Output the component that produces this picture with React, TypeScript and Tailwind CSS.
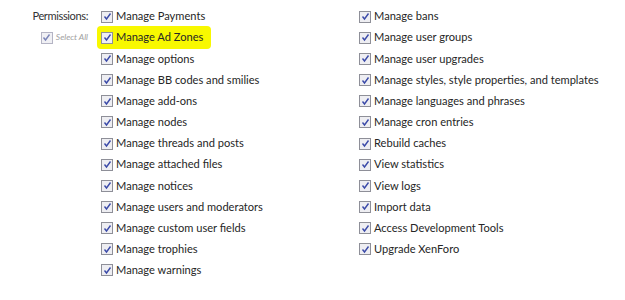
import React from "react";

const left = [
  "Manage Payments",
  "Manage Ad Zones",
  "Manage options",
  "Manage BB codes and smilies",
  "Manage add-ons",
  "Manage nodes",
  "Manage threads and posts",
  "Manage attached files",
  "Manage notices",
  "Manage users and moderators",
  "Manage custom user fields",
  "Manage trophies",
  "Manage warnings",
];
const right = [
  "Manage bans",
  "Manage user groups",
  "Manage user upgrades",
  "Manage styles, style properties, and templates",
  "Manage languages and phrases",
  "Manage cron entries",
  "Rebuild caches",
  "View statistics",
  "View logs",
  "Import data",
  "Access Development Tools",
  "Upgrade XenForo",
];

function Box({ faded = false }: { faded?: boolean }) {
  return (
    <span
      className={`inline-flex h-[12px] w-[12px] shrink-0 items-center justify-center border ${
        faded ? "border-[#b4b4c4] bg-[#f0f0f4]" : "border-[#8e8f98] bg-[#eeeef2]"
      }`}
    >
      <svg width="9" height="9" viewBox="0 0 9 9">
        <path
          d="M1.5 4.5 L3.5 7 L7.5 1.5"
          fill="none"
          stroke={faded ? "#7a84b8" : "#3b4aa8"}
          strokeWidth="1.4"
        />
      </svg>
    </span>
  );
}

function Item({ label, hl = false }: { label: string; hl?: boolean }) {
  return (
    <div className="flex h-[21.17px] items-center">
      <div
        className={`flex items-center gap-[3px] ${
          hl ? "-ml-[4px] rounded-[4px] bg-[#f8f800] py-[3px] pl-[4px] pr-[8px]" : ""
        }`}
      >
        <Box />
        <span className="whitespace-nowrap text-[11.1px] text-[#262626]">{label}</span>
      </div>
    </div>
  );
}

export default function App() {
  return (
    <div
      className="h-[300px] w-[625px] bg-white pt-[6px]"
      style={{ fontFamily: "Lato, 'Liberation Sans', sans-serif" }}
    >
      <div className="flex">
        <div className="w-[101px] shrink-0 pr-[13px]">
          <div className="flex h-[21.17px] items-center justify-end">
            <span className="text-[11.1px] tracking-[-0.4px] text-[#333]">Permissions:</span>
          </div>
          <div className="flex h-[21.17px] items-center justify-end gap-[3px]">
            <Box faded />
            <span className="text-[8.5px] italic text-[#a0a0a0]">Select All</span>
          </div>
        </div>
        <div className="w-[258px] shrink-0">
          {left.map((l, i) => (
            <Item key={l} label={l} hl={i === 1} />
          ))}
        </div>
        <div>
          {right.map((l) => (
            <Item key={l} label={l} />
          ))}
        </div>
      </div>
    </div>
  );
}
